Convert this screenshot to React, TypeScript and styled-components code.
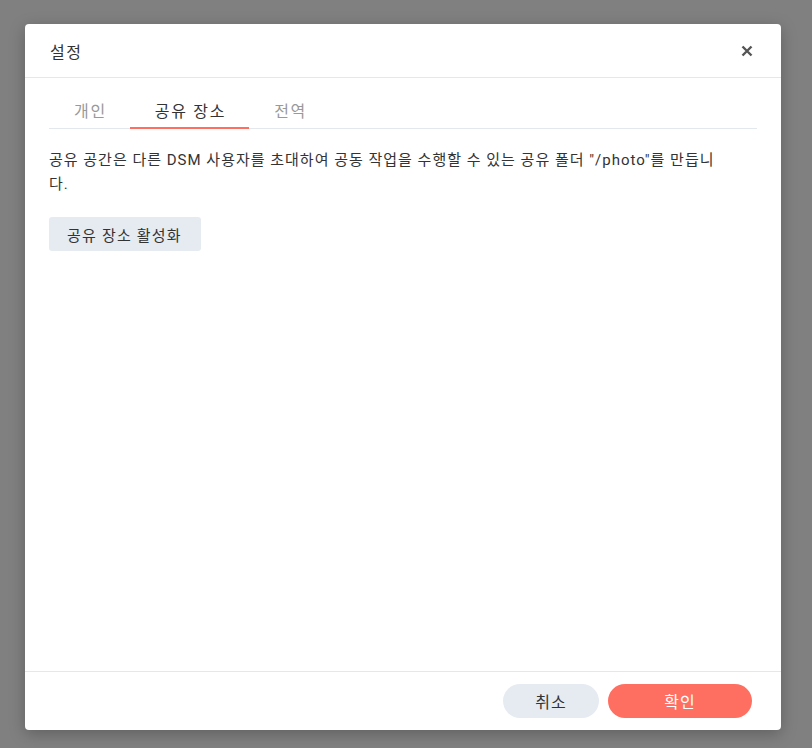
import styled, { createGlobalStyle } from "styled-components";

const GlobalStyle = createGlobalStyle`
  html, body {
    margin: 0;
    padding: 0;
    background: #808080;
    font-family: Roboto, "Noto Sans CJK KR", "Noto Sans", sans-serif;
    color: #333;
  }
`;

const Backdrop = styled.div`
  width: 812px;
  height: 748px;
  background: #808080;
  padding: 24px 0 0 25px;
  box-sizing: border-box;
`;

const Dialog = styled.div`
  width: 756px;
  height: 706px;
  background: #fff;
  border-radius: 4px;
  box-shadow: 0 4px 16px rgba(0, 0, 0, 0.25);
  display: flex;
  flex-direction: column;
`;

const Header = styled.div`
  height: 53px;
  display: flex;
  align-items: center;
  justify-content: space-between;
  padding: 0 26px 0 25px;
  border-bottom: 1px solid #e3e8ef;
  flex-shrink: 0;
`;

const Title = styled.div`
  font-size: 16px;
  letter-spacing: 1.5px;
  color: #333;
`;

const CloseButton = styled.button`
  border: none;
  background: none;
  padding: 0;
  width: 16px;
  height: 16px;
  display: flex;
  align-items: center;
  justify-content: center;
  cursor: pointer;
`;

const Body = styled.div`
  flex: 1;
  padding: 15px 24px 0 24px;
`;

const Tabs = styled.div`
  display: flex;
  border-bottom: 1px solid #e3e8ef;
`;

const Tab = styled.div<{ $active?: boolean }>`
  box-sizing: border-box;
  padding: 2px 23px 0 25px;
  height: 36px;
  line-height: 34px;
  font-size: 16px;
  letter-spacing: 1.7px;
  color: ${({ $active }) => ($active ? "#333" : "#999")};
  border-bottom: 2px solid ${({ $active }) => ($active ? "#ff6f61" : "transparent")};
  margin-bottom: -1px;
`;

const Description = styled.p`
  margin: 19px 0 0 0;
  max-width: 680px;
  font-size: 15px;
  letter-spacing: 1px;
  line-height: 24px;
  color: #333;
`;

const ActionButton = styled.button`
  margin-top: 21px;
  height: 34px;
  padding: 0 19px 0 18px;
  border: none;
  border-radius: 3px;
  background: #e6ebf2;
  color: #333;
  font-family: inherit;
  font-size: 15px;
  letter-spacing: 1.2px;
`;

const Footer = styled.div`
  height: 58px;
  border-top: 1px solid #e3e8ef;
  display: flex;
  align-items: center;
  justify-content: flex-end;
  gap: 9px;
  padding: 0 29px 0 0;
  flex-shrink: 0;
`;

const PillButton = styled.button<{ $primary?: boolean }>`
  height: 34px;
  width: ${({ $primary }) => ($primary ? "144px" : "96px")};
  border: none;
  border-radius: 17px;
  font-family: inherit;
  font-size: 16px;
  letter-spacing: 1px;
  background: ${({ $primary }) => ($primary ? "#ff6f61" : "#e6ebf2")};
  color: ${({ $primary }) => ($primary ? "#fff" : "#333")};
`;

export default function App() {
  return (
    <>
      <GlobalStyle />
      <Backdrop>
        <Dialog>
          <Header>
            <Title>설정</Title>
            <CloseButton aria-label="닫기">
              <svg width="12" height="12" viewBox="0 0 12 12">
                <path d="M1.5 1.5 L10.5 10.5 M10.5 1.5 L1.5 10.5" stroke="#555" strokeWidth="2.4" />
              </svg>
            </CloseButton>
          </Header>
          <Body>
            <Tabs>
              <Tab>개인</Tab>
              <Tab $active>공유 장소</Tab>
              <Tab>전역</Tab>
            </Tabs>
            <Description>
              공유 공간은 다른 DSM 사용자를 초대하여 공동 작업을 수행할 수 있는 공유 폴더 "/photo"를 만듭니다.
            </Description>
            <ActionButton>공유 장소 활성화</ActionButton>
          </Body>
          <Footer>
            <PillButton>취소</PillButton>
            <PillButton $primary>확인</PillButton>
          </Footer>
        </Dialog>
      </Backdrop>
    </>
  );
}
